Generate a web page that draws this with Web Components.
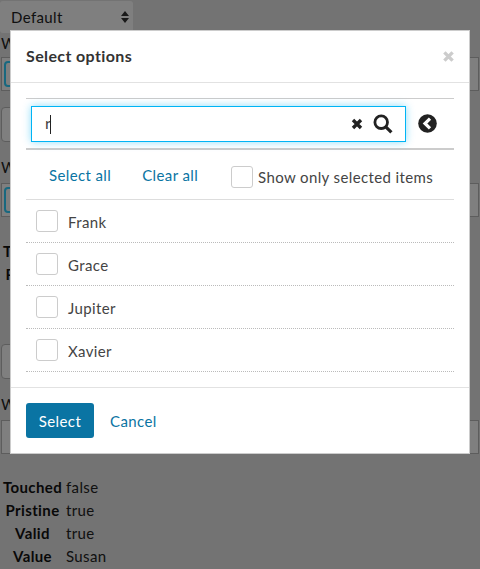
<!DOCTYPE html>
<html>
    <head>
        <meta charset="utf-8">
        <meta name="viewport" content="width=device-width, initial-scale=1.0">
        <title>select options modal</title>
        <style>
            html, body { margin: 0; height: 100%; }
            body {
                background: #e6e6e6;
                color: #222;
                font: 15px/20px Lato, sans-serif;
                letter-spacing: .38px;
                overflow: hidden;
            }
        </style>
    </head>

    <body>
        <demo-page></demo-page>

        <select-modal title-text="Select options">
            <search-bar slot="search"></search-bar>
            <bulk-actions slot="actions"></bulk-actions>
            <option-row>Frank</option-row>
            <option-row>Grace</option-row>
            <option-row>Jupiter</option-row>
            <option-row>Xavier</option-row>
        </select-modal>

    <script>
        // small helper, every component below is just markup + styles
        function shadow(el, html) {
            el.attachShadow({ mode: 'open' })
            el.shadowRoot.innerHTML = html
        }

        class CheckBox extends HTMLElement {
            constructor() {
                super()
                shadow(this, `
                <style>
                    :host {
                        display: block;
                        flex: none;
                        box-sizing: border-box;
                        width: 22px;
                        height: 22px;
                        background: #fff;
                        border: 1px solid #ccc;
                        border-radius: 3px;
                    }
                </style>`)
            }
        }

        class DemoPage extends HTMLElement {
            constructor() {
                super()
                shadow(this, `
                <style>
                    :host { display: block; padding-top: 1px; }
                    .select {
                        display: flex;
                        align-items: center;
                        justify-content: space-between;
                        box-sizing: border-box;
                        width: 133px;
                        height: 32px;
                        padding: 0 3px 0 11px;
                        background: #fff;
                        border-radius: 3px;
                    }
                    .label { height: 20px; padding-left: 1px; }
                    .picker {
                        box-sizing: border-box;
                        height: 34px;
                        margin: 0 1px;
                        padding: 3px 2px;
                        background: #fff;
                        border: 1px solid #bbb;
                    }
                    .picker.empty { padding: 0; }
                    .picker span {
                        display: block;
                        box-sizing: border-box;
                        width: 90px;
                        height: 26px;
                        border: 2px solid #30d0ff;
                        border-radius: 4px;
                    }
                    .text {
                        box-sizing: border-box;
                        width: 133px;
                        height: 35px;
                        margin-left: 1px;
                        background: #fff;
                        border: 1px solid #bbb;
                        border-radius: 4px;
                    }
                    dl {
                        display: grid;
                        grid-template-columns: 65px 1fr;
                        column-gap: 1px;
                        margin: 0;
                        line-height: 23px;
                    }
                    dt { font-weight: 700; text-align: center; color: #111; }
                    dd { margin: 0; }
                </style>
                <div class="select">
                    <span>Default</span>
                    <svg width="10" height="14" viewBox="0 0 10 14"><path d="M5 1l4 5H1zM5 13L1 8h8z" fill="#333"/></svg>
                </div>
                <div class="label">W</div>
                <div class="picker" style="margin-top:4px"><span></span></div>
                <div class="text" style="margin-top:16px"></div>
                <div class="label" style="margin-top:15px">W</div>
                <div class="picker" style="margin-top:6px"><span></span></div>
                <dl style="margin-top:23px">
                    <dt>Touched</dt><dd>false</dd>
                    <dt>Pristine</dt><dd>true</dd>
                </dl>
                <div class="text" style="margin-top:58px"></div>
                <div class="label" style="margin-top:15px">W</div>
                <div class="picker empty" style="margin-top:6px"></div>
                <dl style="margin-top:22px">
                    <dt>Touched</dt><dd>false</dd>
                    <dt>Pristine</dt><dd>true</dd>
                    <dt>Valid</dt><dd>true</dd>
                    <dt>Value</dt><dd>Susan</dd>
                </dl>`)
            }
        }

        class SelectModal extends HTMLElement {
            constructor() {
                super()
                shadow(this, `
                <style>
                    :host {
                        position: fixed;
                        inset: 0;
                        display: block;
                        background: rgba(0, 0, 0, .5);
                        font: 15px/20px Lato, sans-serif;
                        color: #444;
                    }
                    .dialog {
                        box-sizing: border-box;
                        width: 460px;
                        height: 424px;
                        margin: 30px 0 0 10px;
                        background: #fff;
                        border: 1px solid #ccc;
                        display: flex;
                        flex-direction: column;
                    }
                    header {
                        display: flex;
                        align-items: center;
                        justify-content: space-between;
                        height: 51px;
                        padding: 0 15px;
                        border-bottom: 1px solid #e2e2e2;
                    }
                    h2 { margin: -1px 0 0; font-size: 16px; font-weight: 700; color: #333; }
                    .body { flex: 1; padding: 15px 15px 0; }
                    .rows { display: block; }
                    footer {
                        display: flex;
                        align-items: center;
                        gap: 16px;
                        height: 65px;
                        padding: 0 15px;
                        border-top: 1px solid #e2e2e2;
                    }
                    .primary {
                        box-sizing: border-box;
                        width: 68px;
                        height: 35px;
                        padding: 0;
                        background: #0a74a3;
                        border: 0;
                        border-radius: 3px;
                        color: #fff;
                        font: inherit;
                        letter-spacing: inherit;
                    }
                    .link { color: #0a74a3; }
                </style>
                <div class="dialog">
                    <header>
                        <h2>${this.getAttribute('title-text')}</h2>
                        <svg width="11" height="11" viewBox="0 0 11 11"><path d="M1.4 1.4l8.2 8.2M9.6 1.4l-8.2 8.2" stroke="#ccc" stroke-width="3.4"/></svg>
                    </header>
                    <div class="body">
                        <slot name="search"></slot>
                        <slot name="actions"></slot>
                        <div class="rows"><slot></slot></div>
                    </div>
                    <footer>
                        <button class="primary">Select</button>
                        <span class="link">Cancel</span>
                    </footer>
                </div>`)
            }
        }

        class SearchBar extends HTMLElement {
            constructor() {
                super()
                shadow(this, `
                <style>
                    :host {
                        display: flex;
                        align-items: center;
                        box-sizing: border-box;
                        height: 52px;
                        padding: 0 5px;
                        border-top: 1px solid #ccc;
                        border-bottom: 2px solid #ccc;
                    }
                    .field {
                        display: flex;
                        align-items: center;
                        box-sizing: border-box;
                        width: 375px;
                        height: 36px;
                        padding: 0 12px 0 13px;
                        border: 1px solid #00b4f5;
                        box-shadow: 0 0 8px rgba(0, 180, 245, .45);
                    }
                    .value { flex: 1; color: #444; font-size: 16px; letter-spacing: 0; }
                    .caret {
                        display: inline-block;
                        width: 1px;
                        height: 19px;
                        margin-left: -1px;
                        background: #222;
                        vertical-align: -5px;
                    }
                    .clear { margin-right: 10px; }
                    .back { margin-left: 12px; }
                </style>
                <div class="field">
                    <div class="value">r<span class="caret"></span></div>
                    <svg class="clear" width="12" height="12" viewBox="0 0 12 12"><path d="M2 2l8 8M10 2l-8 8" stroke="#222" stroke-width="3.4"/></svg>
                    <svg width="20" height="20" viewBox="0 0 20 20" fill="none" stroke="#222"><circle cx="8.2" cy="8.2" r="6.3" stroke-width="2.8"/><path d="M12.8 12.8l5.6 5.6" stroke-width="3.2"/></svg>
                </div>
                <svg class="back" width="19" height="19" viewBox="0 0 19 19"><circle cx="9.5" cy="9.5" r="9.3" fill="#222"/><path d="M12 4.6L7 9.5l5 4.9" fill="none" stroke="#fff" stroke-width="3.2"/></svg>`)
            }
        }

        class BulkActions extends HTMLElement {
            constructor() {
                super()
                shadow(this, `
                <style>
                    :host {
                        display: flex;
                        align-items: center;
                        box-sizing: border-box;
                        height: 50px;
                        padding-left: 23px;
                        border-bottom: 1px solid #ddd;
                    }
                    a { color: #0a74a3; margin-right: 31px; }
                    a + a { margin-right: 33px; }
                    check-box { margin-top: 4px; }
                    label { margin: 4px 0 0 5px; }
                </style>
                <a>Select all</a>
                <a>Clear all</a>
                <check-box></check-box>
                <label>Show only selected items</label>`)
            }
        }

        class OptionRow extends HTMLElement {
            constructor() {
                super()
                shadow(this, `
                <style>
                    :host {
                        display: flex;
                        align-items: center;
                        gap: 10px;
                        box-sizing: border-box;
                        height: 43px;
                        padding: 0 10px 1px;
                        border-bottom: 1px dotted #bbb;
                    }
                    span { margin-top: 2px; }
                </style>
                <check-box></check-box>
                <span><slot></slot></span>`)
            }
        }

        customElements.define("check-box", CheckBox)
        customElements.define("demo-page", DemoPage)
        customElements.define("select-modal", SelectModal)
        customElements.define("search-bar", SearchBar)
        customElements.define("bulk-actions", BulkActions)
        customElements.define("option-row", OptionRow)
    </script>
    </body>
</html>
